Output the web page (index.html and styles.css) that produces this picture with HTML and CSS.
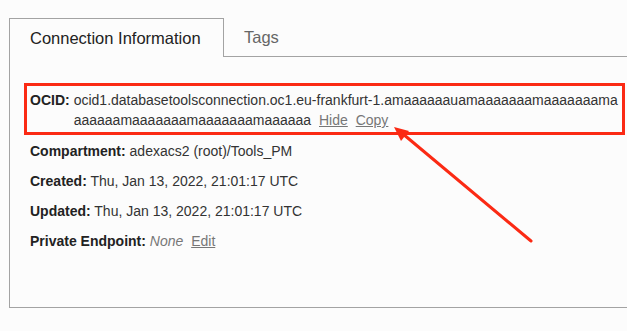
FILE: index.html
```html
<!DOCTYPE html>
<html lang="en">

<head>
    <meta charset="UTF-8">
    <meta name="viewport" content="width=device-width, initial-scale=1.0">
    <title>Connection Information</title>
    <link rel="stylesheet" href="styles.css">
</head>

<body>

    <div class="page">
        <div class="tabs">
            <div class="tab active">Connection Information</div>
            <div class="tab">Tags</div>
            <div class="tab-fill"></div>
        </div>

        <div class="panel">
            <!-- ocid, marked with the red box -->
            <div class="row ocid">
                <span class="label">OCID:</span>
                <div class="value">
                    ocid1.databasetoolsconnection.oc1.eu-frankfurt-1.amaaaaaauamaaaaaaamaaaaaaama<br>
                    aaaaaamaaaaaaamaaaaaaamaaaaaa
                    <a href="#" class="link">Hide</a>
                    <a href="#" class="link">Copy</a>
                </div>
            </div>
            <div class="row"><span class="label">Compartment:</span> adexacs2 (root)/Tools_PM</div>
            <div class="row"><span class="label">Created:</span> Thu, Jan 13, 2022, 21:01:17 UTC</div>
            <div class="row"><span class="label">Updated:</span> Thu, Jan 13, 2022, 21:01:17 UTC</div>
            <div class="row">
                <span class="label">Private Endpoint:</span> <span class="none">None</span>
                <a href="#" class="link">Edit</a>
            </div>
        </div>

        <svg class="arrow" width="627" height="331" viewBox="0 0 627 331">
            <line x1="531" y1="241" x2="403" y2="134" stroke="#fb2a14" stroke-width="3" stroke-linecap="round" />
            <polygon points="394,127 409,131 401,141" fill="#fb2a14" />
        </svg>
    </div>

</body>

</html>
```

FILE: styles.css
```css
* {
    margin: 0;
    padding: 0;
    box-sizing: border-box;
}

body {
    background: #fcfcfc;
    font-family: "Liberation Sans", Arial, Helvetica, sans-serif;
    color: #2a2a2a;
}

.page {
    position: relative;
    width: 627px;
    height: 331px;
    padding-top: 18px;
    padding-left: 9px;
}

.tabs {
    display: flex;
    height: 39px;
}

.tab {
    padding: 0 20px;
    font-size: 16.5px;
    color: #666;
    display: flex;
    align-items: center;
    border-bottom: 1px solid #a3a3a3;
}

.tab.active {
    width: 215px;
    color: #222;
    border: 1px solid #a3a3a3;
    border-bottom: none;
    padding-top: 1px;
}

.tab-fill {
    flex: 1;
    border-bottom: 1px solid #a3a3a3;
}

.panel {
    height: 251px;
    border-left: 1px solid #a3a3a3;
    border-bottom: 1px solid #a3a3a3;
    padding: 26px 0 0 20px;
    font-size: 14px;
    line-height: 20px;
    color: #333;
}

.row {
    margin-bottom: 10px;
    white-space: nowrap;
}

.label {
    font-weight: bold;
    color: #222;
}

.ocid {
    display: flex;
    gap: 4px;
    width: 601px;
    margin-left: -6px;
    margin-bottom: 6px;
    padding: 4px 3px 2px 3px;
    border: 3px solid #fb2a14;
}

.link {
    color: #777;
    text-decoration: underline;
    margin-left: 4px;
}

.none {
    color: #777;
    font-style: italic;
}

.arrow {
    position: absolute;
    top: 0;
    left: 0;
}
```
